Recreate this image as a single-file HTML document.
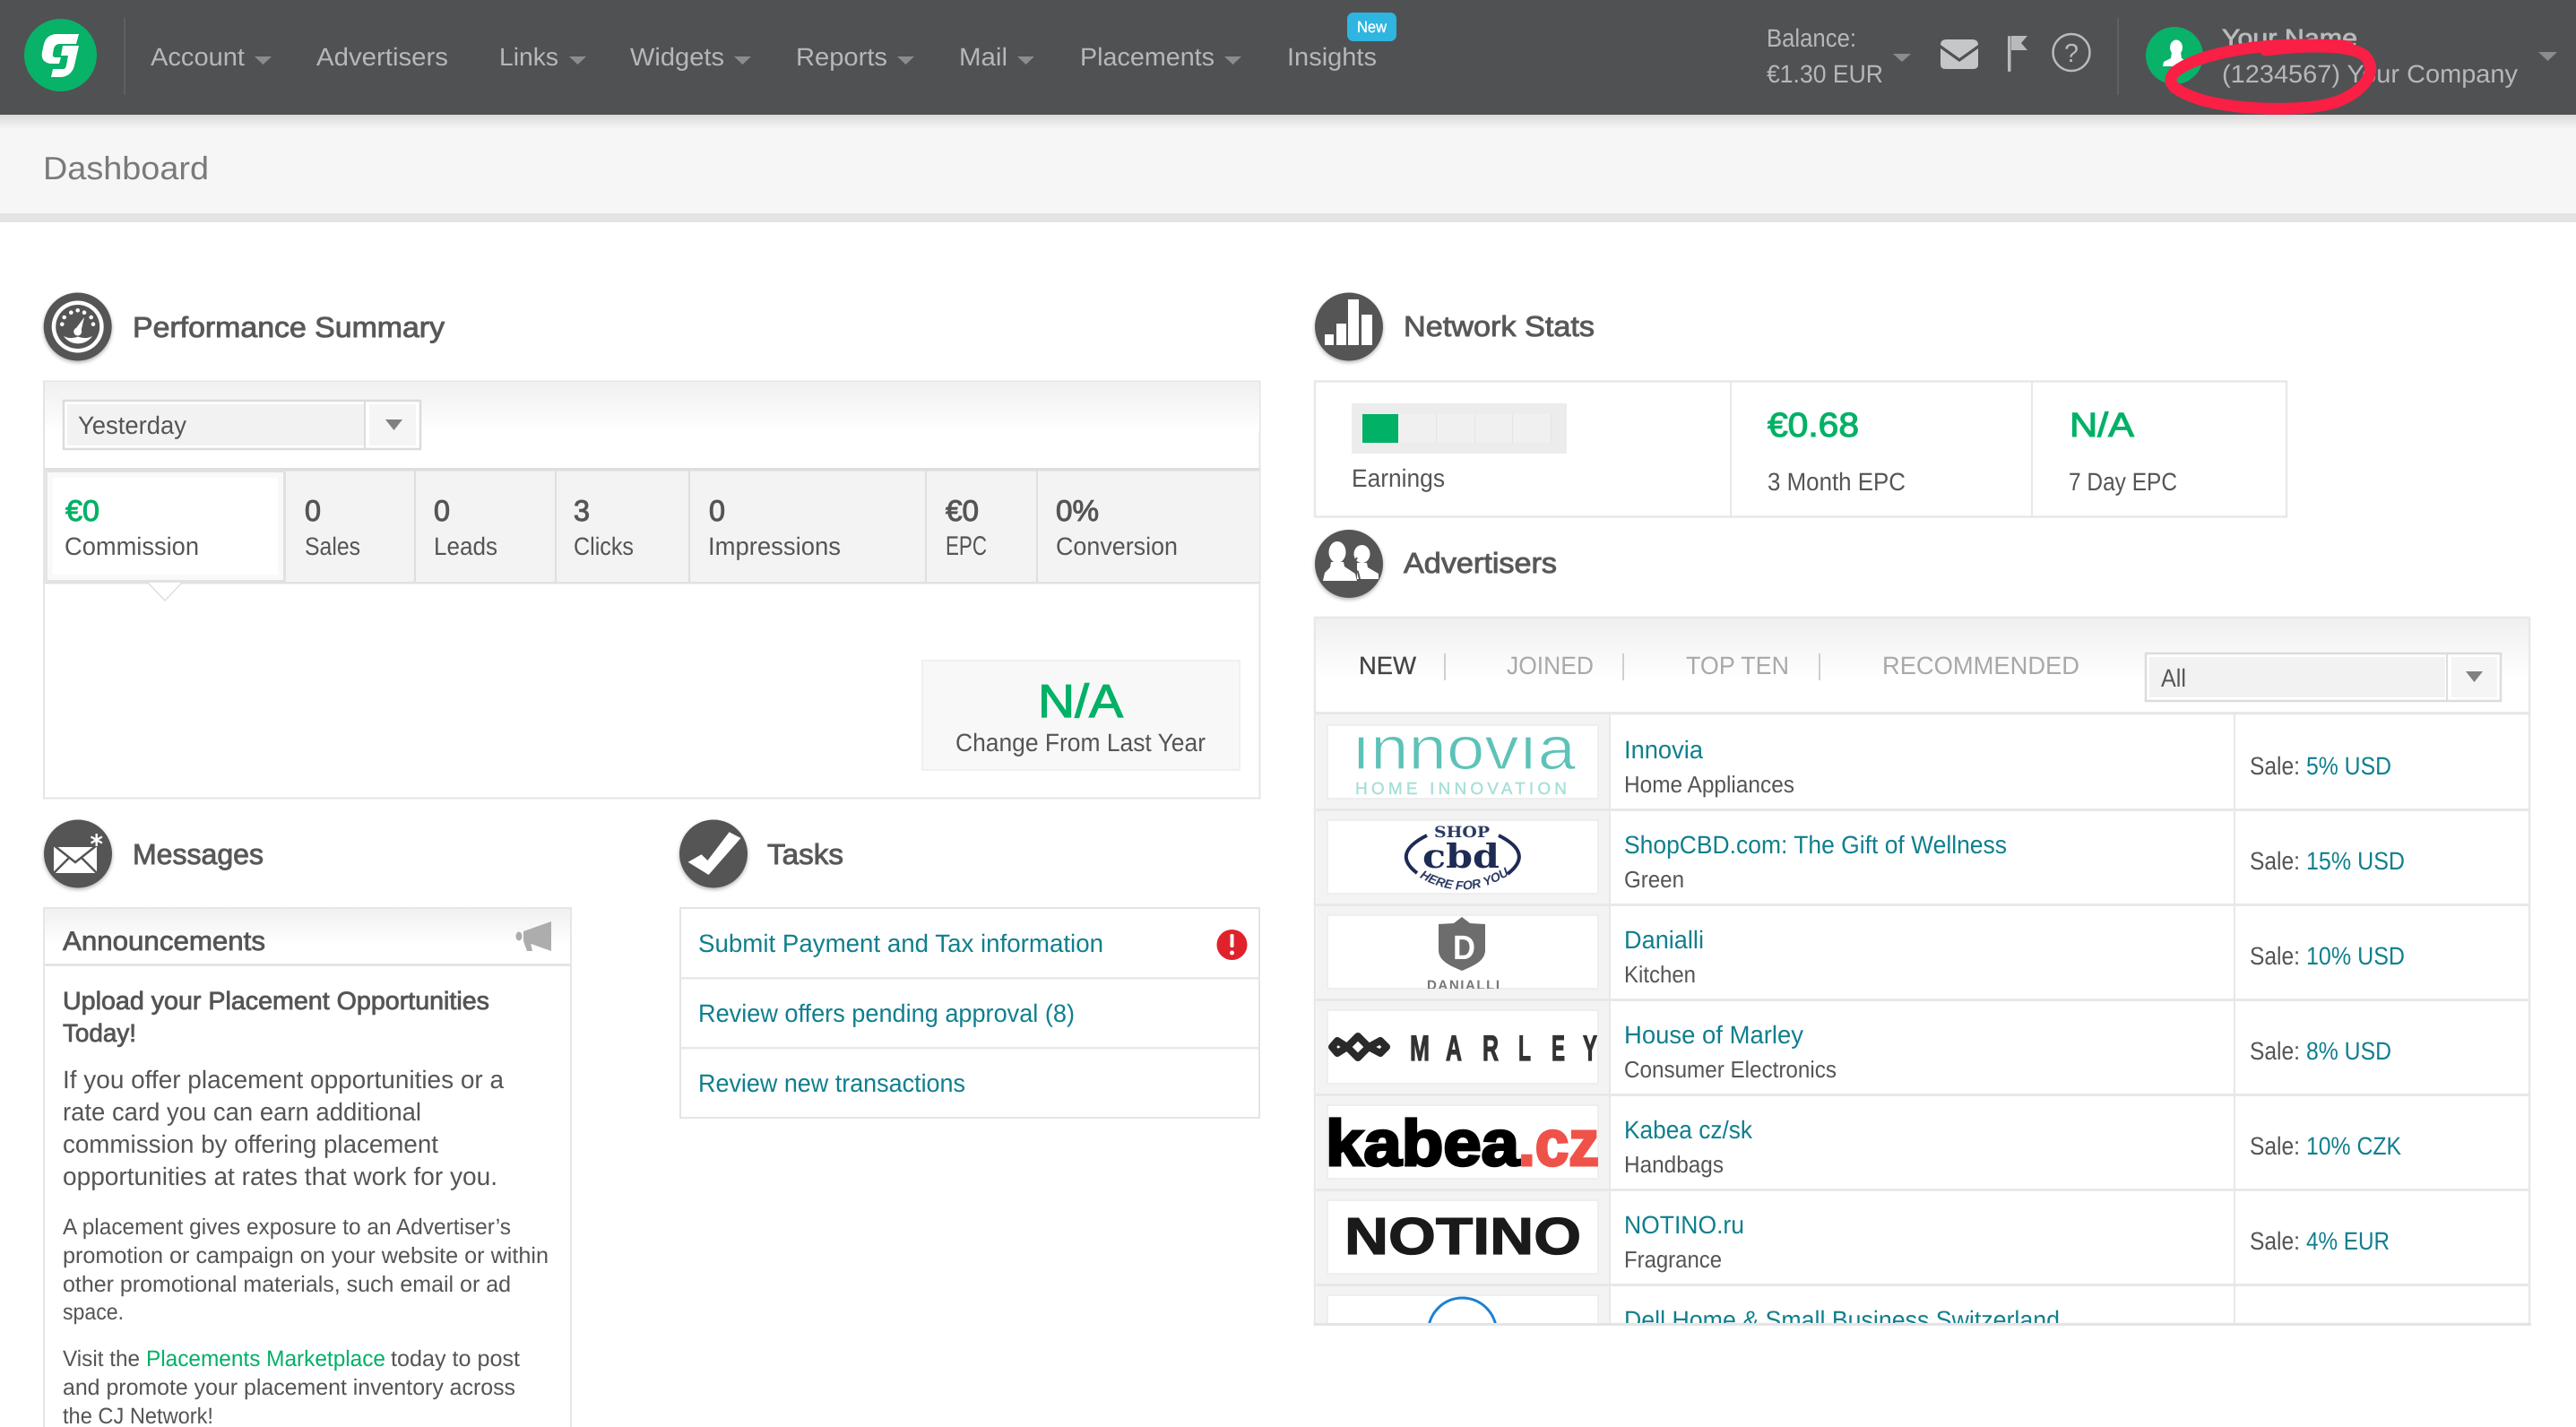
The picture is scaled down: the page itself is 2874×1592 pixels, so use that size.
<!DOCTYPE html>
<html lang="en"><head><meta charset="utf-8"><title>Dashboard</title>
<style>
html,body{margin:0;padding:0;background:#fff;width:2874px;height:1592px;overflow:hidden}
svg{display:block}
text{font-family:"Liberation Sans",sans-serif;font-size:28px;fill:#555;text-rendering:geometricPrecision}
.nav{fill:#b6b7b9}
.h{font-size:32px;fill:#585858;stroke:#585858;stroke-width:.9px}
.val{font-size:33px;fill:#555;stroke:#555;stroke-width:1px}
.g{fill:#00b166}
.lnk{fill:#0f7f8e}
.mute{fill:#a9a9a9}
.p2{font-size:25px}
.ic{filter:drop-shadow(0 2px 2px rgba(0,0,0,.3))}
</style></head><body>
<svg xmlns="http://www.w3.org/2000/svg" width="2874" height="1592" viewBox="0 0 2874 1592">
<defs>
<linearGradient id="hg" x1="0" y1="0" x2="0" y2="1"><stop offset="0" stop-color="#f0f0f0"/><stop offset="1" stop-color="#fff"/></linearGradient>
<linearGradient id="sh" x1="0" y1="0" x2="0" y2="1"><stop offset="0" stop-color="#d9d9d9"/><stop offset="1" stop-color="#f6f6f6"/></linearGradient>
<clipPath id="rows"><rect x="1466" y="790" width="1358" height="686"/></clipPath>
<clipPath id="dan"><rect x="1482" y="1022" width="300" height="81"/></clipPath>
<path id="hereArc" d="M1581 977 Q1630 1008 1682 977"/>
</defs>

<!-- header -->
<rect width="2874" height="128" fill="#505153"/>
<rect y="128" width="2874" height="110" fill="#f6f6f6"/>
<rect y="128" width="2874" height="16" fill="url(#sh)"/>
<rect y="238" width="2874" height="10" fill="#e4e4e3"/>
<circle cx="67.500" cy="61.500" r="40.500" fill="#08b268"/>
<path d="M62 38 L88 38 L85 49 L66 49 Q62 49 60 54 L59 60 Q58 64 62 64 L68 64 L66 71 L56 71 Q45 69 47 58 L49 49 Q52 39 62 38 Z" fill="#fff"/>
<path d="M70 51 L88 51 L83 73 Q80 85 68 86 L57 86 L59 77 L71 77 Q73 77 74 73 L76 62 L68 62 Z" fill="#fff"/>
<rect x="138" y="20" width="2" height="86" fill="#5f6062"/>
<rect x="2362" y="20" width="2" height="86" fill="#5f6062"/>

<text class="nav" x="168" y="73" textLength="105" lengthAdjust="spacingAndGlyphs">Account</text>
<polygon points="284,63 303,63 293.500,72" fill="#8b8c8d"/>
<text class="nav" x="353" y="73" textLength="147" lengthAdjust="spacingAndGlyphs">Advertisers</text>
<text class="nav" x="557" y="73" textLength="66" lengthAdjust="spacingAndGlyphs">Links</text>
<polygon points="635,63 654,63 644.500,72" fill="#8b8c8d"/>
<text class="nav" x="703" y="73" textLength="105" lengthAdjust="spacingAndGlyphs">Widgets</text>
<polygon points="819,63 838,63 828.500,72" fill="#8b8c8d"/>
<text class="nav" x="888" y="73" textLength="102" lengthAdjust="spacingAndGlyphs">Reports</text>
<polygon points="1001,63 1020,63 1010.500,72" fill="#8b8c8d"/>
<text class="nav" x="1070" y="73" textLength="54" lengthAdjust="spacingAndGlyphs">Mail</text>
<polygon points="1135,63 1154,63 1144.500,72" fill="#8b8c8d"/>
<text class="nav" x="1205" y="73" textLength="150" lengthAdjust="spacingAndGlyphs">Placements</text>
<polygon points="1366,63 1385,63 1375.500,72" fill="#8b8c8d"/>
<text class="nav" x="1436" y="73" textLength="100" lengthAdjust="spacingAndGlyphs">Insights</text>
<rect x="1503" y="14" width="55" height="32" rx="7" fill="#2eb5e0"/>
<text x="1514" y="36" textLength="33" lengthAdjust="spacingAndGlyphs" style="font-size:18px;fill:#fff;stroke:#fff;stroke-width:.3px">New</text>

<text class="nav" x="1971" y="52" textLength="100" lengthAdjust="spacingAndGlyphs">Balance:</text>
<text class="nav" x="1971" y="92" textLength="130" lengthAdjust="spacingAndGlyphs">€1.30 EUR</text>
<polygon points="2112,60 2132,60 2122,69" fill="#8b8c8d"/>
<!-- envelope -->
<path d="M2172 44 H2200 Q2207 44 2207 50 L2186 65 L2165 50 Q2165 44 2172 44 Z" fill="#c4c6c8"/>
<path d="M2165 54 L2186 69 L2207 54 V72 Q2207 77 2201 77 H2171 Q2165 77 2165 72 Z" fill="#c4c6c8"/>
<!-- flag -->
<rect x="2240" y="40" width="3.500" height="40" rx="1.500" fill="#b9babc"/>
<path d="M2244 40 H2262 L2255 48 L2262 56 H2244 Z" fill="#b9babc"/>
<!-- help -->
<circle cx="2311" cy="58.500" r="20.500" fill="none" stroke="#b9babc" stroke-width="2.500"/>
<text x="2303" y="69" textLength="16" lengthAdjust="spacingAndGlyphs" style="font-size:29px;fill:#b9babc">?</text>
<!-- user -->
<circle cx="2426" cy="62" r="32" fill="#08b268"/>
<ellipse cx="2428" cy="53" rx="7" ry="8.500" fill="#fff"/>
<path d="M2423 58 H2433 L2434 65 L2441 69 L2441 74 H2413 L2414 69 L2422 65 Z" fill="#fff"/>
<text x="2479" y="52" textLength="151" lengthAdjust="spacingAndGlyphs" style="fill:#b9babc;stroke:#b9babc;stroke-width:.8px">Your Name</text>
<text class="nav" x="2479" y="92" textLength="330" lengthAdjust="spacingAndGlyphs">(1234567) Your Company</text>
<polygon points="2832,58 2853,58 2842.500,68" fill="#8b8c8d"/>
<path d="M2528 56 C2575 50 2623 50 2638 62 C2655 79 2638 102 2606 114 C2570 125 2500 123 2458 112 C2426 102 2414 92 2427 80 C2450 62 2505 50 2570 50 C2590 50 2605 50 2620 52" fill="none" stroke="#f91f45" stroke-width="13" stroke-linecap="round"/>

<text x="48" y="200" textLength="185" lengthAdjust="spacingAndGlyphs" style="font-size:36px;fill:#7a7a7a">Dashboard</text>

<!-- Performance Summary -->
<g class="ic"><circle cx="86.700" cy="364.500" r="38" fill="#555"/></g>
<circle cx="86.700" cy="364.500" r="29" fill="#fff"/>
<circle cx="86.700" cy="364.500" r="24.500" fill="#555"/>
<g fill="#fff">
<circle cx="69.300" cy="361.700" r="2.300"/><circle cx="71.700" cy="354" r="2.300"/><circle cx="79.300" cy="348.700" r="2.300"/><circle cx="86.700" cy="346.300" r="2.300"/><circle cx="94" cy="348.700" r="2.300"/><circle cx="101.700" cy="354" r="2.300"/><circle cx="104" cy="361.700" r="2.300"/>
<circle cx="86.700" cy="370" r="4.500"/>
<polygon points="83.500,368 90,371 94,354"/>
<path d="M71 375 Q79 379 87 375.500 Q95 379 103 375 A19.500 19.500 0 0 1 71 375 Z"/>
</g>
<text class="h" x="148" y="376" textLength="348" lengthAdjust="spacingAndGlyphs">Performance Summary</text>

<rect x="49" y="425.500" width="1356.500" height="465" fill="#fff" stroke="#e4e4e4" stroke-width="2"/>
<rect x="50" y="427" width="1355" height="55" fill="url(#hg)"/>
<!-- select -->
<rect x="71" y="447" width="398" height="54" fill="#fff" stroke="#dcdcdc" stroke-width="2.500"/>
<rect x="75" y="451" width="331" height="46" fill="#f2f2f2"/>
<rect x="406" y="447" width="2" height="54" fill="#ddd"/>
<rect x="412" y="451" width="52" height="46" fill="#f5f5f5"/>
<polygon points="430,468 449,468 439.500,480" fill="#808080"/>
<text x="87" y="484" textLength="121" lengthAdjust="spacingAndGlyphs">Yesterday</text>

<!-- tabs -->
<rect x="50" y="522" width="1355" height="129" fill="#f3f3f3"/>
<rect x="50" y="522" width="1355" height="3.500" fill="#dfdddd"/>
<rect x="50" y="649" width="1355" height="2.500" fill="#e2e0e0"/>
<rect x="50" y="524" width="269" height="126" fill="#fff"/>
<rect x="50" y="524" width="269" height="3" fill="#e3e0e0"/>
<rect x="316" y="524" width="3" height="126" fill="#e3e0e0"/>
<rect x="50" y="647" width="269" height="4" fill="#e3e0e0"/>
<rect x="50" y="524" width="3" height="126" fill="#e6e4e4"/>
<rect x="56" y="530" width="257" height="114" fill="none" stroke="#f9f9f9" stroke-width="6"/>
<g fill="#dfdfdf"><rect x="462" y="524" width="2" height="125"/><rect x="619" y="524" width="2" height="125"/><rect x="768" y="524" width="2" height="125"/><rect x="1032" y="524" width="2" height="125"/><rect x="1156" y="524" width="2" height="125"/></g>
<polygon points="165,650 203,650 184,670" fill="#fff"/>
<path d="M165 650 L184 670 L203 650" fill="none" stroke="#e0dede" stroke-width="1.500"/>

<text x="73" y="581" textLength="38" lengthAdjust="spacingAndGlyphs" class="val" style="fill:#00b166;stroke:#00b166">€0</text>
<text x="72" y="619" textLength="150" lengthAdjust="spacingAndGlyphs">Commission</text>
<text x="340" y="581" class="val" textLength="18" lengthAdjust="spacingAndGlyphs">0</text>
<text x="340" y="619" textLength="62" lengthAdjust="spacingAndGlyphs">Sales</text>
<text x="484" y="581" class="val" textLength="18" lengthAdjust="spacingAndGlyphs">0</text>
<text x="484" y="619" textLength="71" lengthAdjust="spacingAndGlyphs">Leads</text>
<text x="640" y="581" class="val" textLength="18" lengthAdjust="spacingAndGlyphs">3</text>
<text x="640" y="619" textLength="67" lengthAdjust="spacingAndGlyphs">Clicks</text>
<text x="791" y="581" class="val" textLength="18" lengthAdjust="spacingAndGlyphs">0</text>
<text x="790" y="619" textLength="148" lengthAdjust="spacingAndGlyphs">Impressions</text>
<text x="1055" y="581" class="val" textLength="37" lengthAdjust="spacingAndGlyphs">€0</text>
<text x="1055" y="619" textLength="46" lengthAdjust="spacingAndGlyphs" style="font-size:30px">EPC</text>
<text x="1178" y="581" class="val" textLength="48" lengthAdjust="spacingAndGlyphs">0%</text>
<text x="1178" y="619" textLength="136" lengthAdjust="spacingAndGlyphs">Conversion</text>

<rect x="1029" y="737" width="354" height="122" fill="#f8f8f8" stroke="#f0f0f0" stroke-width="2"/>
<text x="1158" y="800" textLength="95" lengthAdjust="spacingAndGlyphs" class="g" style="font-size:52px;stroke:#00b166;stroke-width:1.200px">N/A</text>
<text x="1066" y="838" textLength="279" lengthAdjust="spacingAndGlyphs">Change From Last Year</text>

<!-- Network stats -->
<g class="ic"><circle cx="1505" cy="364.500" r="38" fill="#555"/></g>
<g fill="#fff"><rect x="1478" y="373" width="10" height="12"/><rect x="1491" y="361" width="11" height="24"/><rect x="1504" y="334" width="12" height="51"/><rect x="1519" y="351" width="12" height="34"/></g>
<text class="h" x="1566" y="375" textLength="213" lengthAdjust="spacingAndGlyphs">Network Stats</text>

<rect x="1467" y="425.500" width="1084" height="151" fill="#fff" stroke="#e8e8e8" stroke-width="2.500"/>
<rect x="1930" y="426" width="2" height="150" fill="#e8e8e8"/>
<rect x="2266" y="426" width="2" height="150" fill="#e8e8e8"/>
<rect x="1508" y="450" width="240" height="56" fill="#ececec"/>
<g fill="#f0f0f0"><rect x="1560" y="462" width="170" height="32"/></g>
<g fill="#e4e4e4"><rect x="1602" y="462" width="1" height="32"/><rect x="1645" y="462" width="1" height="32"/><rect x="1687" y="462" width="1" height="32"/><rect x="1730" y="462" width="1" height="32"/></g>
<rect x="1520" y="462" width="40" height="32" fill="#00b166"/>
<text x="1508" y="543" textLength="104" lengthAdjust="spacingAndGlyphs">Earnings</text>
<text x="1972" y="487" textLength="102" lengthAdjust="spacingAndGlyphs" class="g" style="font-size:38px;stroke:#00b166;stroke-width:1.100px">€0.68</text>
<text x="1972" y="547" textLength="154" lengthAdjust="spacingAndGlyphs">3 Month EPC</text>
<text x="2309" y="487" textLength="72" lengthAdjust="spacingAndGlyphs" class="g" style="font-size:38px;stroke:#00b166;stroke-width:1.100px">N/A</text>
<text x="2308" y="547" textLength="121" lengthAdjust="spacingAndGlyphs">7 Day EPC</text>

<!-- Advertisers -->
<g class="ic"><circle cx="1505" cy="629" r="38" fill="#555"/></g>
<g fill="#fff">
<ellipse cx="1519.500" cy="618" rx="9" ry="10"/>
<path d="M1514 628 H1525 L1526 633 L1538 640 V646 H1514 Z"/>
<ellipse cx="1492" cy="616" rx="9.500" ry="12"/>
</g>
<path d="M1485 627 H1499 L1500 632 L1512 640 L1514 648 H1476 L1478 639 L1484 633 Z" fill="#fff"/>
<path d="M1514 622 L1508 632 L1515 638 L1517 646" fill="none" stroke="#555" stroke-width="2"/>
<text class="h" x="1566" y="639" textLength="171" lengthAdjust="spacingAndGlyphs">Advertisers</text>

<rect x="1467" y="689" width="1355" height="788" fill="#fff" stroke="#e8e8e8" stroke-width="2.500"/>
<rect x="1468" y="690" width="1353" height="70" fill="url(#hg)"/>
<text x="1516" y="752" textLength="64" lengthAdjust="spacingAndGlyphs" style="fill:#444;stroke:#444;stroke-width:.3px">NEW</text>
<text x="1681" y="752" textLength="97" lengthAdjust="spacingAndGlyphs" class="mute">JOINED</text>
<text x="1881" y="752" textLength="115" lengthAdjust="spacingAndGlyphs" class="mute">TOP TEN</text>
<text x="2100" y="752" textLength="220" lengthAdjust="spacingAndGlyphs" class="mute">RECOMMENDED</text>
<g fill="#cfcfcf"><rect x="1611" y="729" width="2" height="30"/><rect x="1810" y="729" width="2" height="30"/><rect x="2029" y="729" width="2" height="30"/></g>
<rect x="2394" y="729" width="396" height="53" fill="#fff" stroke="#dcdcdc" stroke-width="2.500"/>
<rect x="2398" y="733" width="330" height="45" fill="#f2f2f2"/>
<rect x="2729" y="729" width="2" height="53" fill="#ddd"/>
<rect x="2735" y="733" width="51" height="45" fill="#f5f5f5"/>
<polygon points="2751,749 2770,749 2760.500,761" fill="#808080"/>
<text x="2411" y="766" textLength="28" lengthAdjust="spacingAndGlyphs">All</text>

<g clip-path="url(#rows)">
<rect x="1468" y="794" width="1354" height="3.500" fill="#e8e8e8"/>
<rect x="1469" y="797" width="326" height="680" fill="#f3f3f3"/>
<rect x="1795" y="797" width="2" height="680" fill="#e8e8e8"/>
<rect x="2492" y="797" width="2" height="680" fill="#e8e8e8"/>
<g fill="#e8e8e8"><rect x="1468" y="902" width="1354" height="3"/><rect x="1468" y="1008" width="1354" height="3"/><rect x="1468" y="1114" width="1354" height="3"/><rect x="1468" y="1220" width="1354" height="3"/><rect x="1468" y="1326" width="1354" height="3"/><rect x="1468" y="1432" width="1354" height="3"/></g>
<g fill="#fff" stroke="#eeeeee" stroke-width="2">
<rect x="1481" y="809" width="302" height="82"/><rect x="1481" y="915" width="302" height="82"/><rect x="1481" y="1021" width="302" height="82"/><rect x="1481" y="1127" width="302" height="82"/><rect x="1481" y="1233" width="302" height="82"/><rect x="1481" y="1339" width="302" height="82"/><rect x="1481" y="1445" width="302" height="82"/>
</g>

<!-- logos -->
<text x="1508" y="858" textLength="250" lengthAdjust="spacingAndGlyphs" style="font-size:68px;fill:#5dc2b8;stroke:#fff;stroke-width:1.200px">ınnovıa</text>
<text x="1512" y="886" textLength="236" lengthAdjust="spacing" style="font-size:19px;fill:#a6dfd8;stroke:#a6dfd8;stroke-width:.4px">HOME INNOVATION</text>

<text x="1600" y="934" textLength="62" lengthAdjust="spacingAndGlyphs" style="font-family:'DejaVu Serif',serif;font-weight:bold;font-size:17px;fill:#2c3a63">SHOP</text>
<text x="1587" y="968" textLength="86" lengthAdjust="spacingAndGlyphs" style="font-family:'DejaVu Serif',serif;font-weight:bold;font-size:37px;fill:#1d2b55">cbd</text>
<path d="M1592 932 Q1552 952 1581 974" fill="none" stroke="#1d2b55" stroke-width="4"/>
<path d="M1672 932 Q1712 952 1682 975" fill="none" stroke="#1d2b55" stroke-width="4"/>
<text style="font-size:14px;font-weight:bold;font-style:italic;fill:#2c3a63"><textPath href="#hereArc" startOffset="3">HERE FOR YOU</textPath></text>

<path d="M1631 1023 L1640 1030 L1657 1031 L1657 1060 C1657 1073 1642 1078 1631 1083 C1620 1078 1605 1073 1605 1060 L1605 1031 L1622 1030 Z" fill="#6d6d6d"/>
<text x="1621" y="1070" textLength="25" lengthAdjust="spacingAndGlyphs" style="font-weight:bold;font-size:38px;fill:#fff">D</text>
<g clip-path="url(#dan)"><text x="1592" y="1104" textLength="81" lengthAdjust="spacing" style="font-size:15px;font-weight:bold;fill:#777">DANIALLI</text></g>

<path d="M1486 1168 L1492 1161 L1503 1168 L1515 1156 L1527 1168 L1540 1161 L1547 1168 L1540 1175 L1527 1168 L1515 1180 L1503 1168 L1492 1175 Z" fill="none" stroke="#2a2a2a" stroke-width="8" stroke-linejoin="round"/>
<g style="font-weight:bold">
<text x="1573" y="1183" textLength="22" lengthAdjust="spacingAndGlyphs" style="font-size:40px;fill:#333;stroke:#333;stroke-width:1.200px">M</text>
<text x="1613" y="1183" textLength="18" lengthAdjust="spacingAndGlyphs" style="font-size:40px;fill:#333;stroke:#333;stroke-width:1.200px">A</text>
<text x="1654" y="1183" textLength="18" lengthAdjust="spacingAndGlyphs" style="font-size:40px;fill:#333;stroke:#333;stroke-width:1.200px">R</text>
<text x="1694" y="1183" textLength="14" lengthAdjust="spacingAndGlyphs" style="font-size:40px;fill:#333;stroke:#333;stroke-width:1.200px">L</text>
<text x="1731" y="1183" textLength="15" lengthAdjust="spacingAndGlyphs" style="font-size:40px;fill:#333;stroke:#333;stroke-width:1.200px">E</text>
<text x="1766" y="1183" textLength="16" lengthAdjust="spacingAndGlyphs" style="font-size:40px;fill:#333;stroke:#333;stroke-width:1.200px">Y</text>
</g>

<text x="1479" y="1300" textLength="216" lengthAdjust="spacingAndGlyphs" style="font-weight:bold;font-size:72px;fill:#000;stroke:#000;stroke-width:3px">kabea</text>
<text x="1694" y="1300" textLength="90" lengthAdjust="spacingAndGlyphs" style="font-weight:bold;font-size:72px;fill:#ef5249;stroke:#ef5249;stroke-width:3px">.cz</text>

<text x="1500" y="1399" textLength="264" lengthAdjust="spacingAndGlyphs" style="font-weight:bold;font-size:58px;fill:#1a1a1a;stroke:#1a1a1a;stroke-width:1.200px">NOTINO</text>

<circle cx="1631.500" cy="1486" r="38" fill="none" stroke="#1b80d3" stroke-width="3"/>

<!-- row text -->
<text class="lnk" x="1812" y="846" textLength="88" lengthAdjust="spacingAndGlyphs">Innovia</text>
<text x="1812" y="884" textLength="190" lengthAdjust="spacingAndGlyphs" style="font-size:26px">Home Appliances</text>
<text x="2510" y="864" textLength="56" lengthAdjust="spacingAndGlyphs">Sale:</text><text class="lnk" x="2573" y="864" textLength="95" lengthAdjust="spacingAndGlyphs">5% USD</text>

<text class="lnk" x="1812" y="952" textLength="427" lengthAdjust="spacingAndGlyphs">ShopCBD.com: The Gift of Wellness</text>
<text x="1812" y="990" textLength="67" lengthAdjust="spacingAndGlyphs" style="font-size:26px">Green</text>
<text x="2510" y="970" textLength="56" lengthAdjust="spacingAndGlyphs">Sale:</text><text class="lnk" x="2573" y="970" textLength="110" lengthAdjust="spacingAndGlyphs">15% USD</text>

<text class="lnk" x="1812" y="1058" textLength="89" lengthAdjust="spacingAndGlyphs">Danialli</text>
<text x="1812" y="1096" textLength="80" lengthAdjust="spacingAndGlyphs" style="font-size:26px">Kitchen</text>
<text x="2510" y="1076" textLength="56" lengthAdjust="spacingAndGlyphs">Sale:</text><text class="lnk" x="2573" y="1076" textLength="110" lengthAdjust="spacingAndGlyphs">10% USD</text>

<text class="lnk" x="1812" y="1164" textLength="200" lengthAdjust="spacingAndGlyphs">House of Marley</text>
<text x="1812" y="1202" textLength="237" lengthAdjust="spacingAndGlyphs" style="font-size:26px">Consumer Electronics</text>
<text x="2510" y="1182" textLength="56" lengthAdjust="spacingAndGlyphs">Sale:</text><text class="lnk" x="2573" y="1182" textLength="95" lengthAdjust="spacingAndGlyphs">8% USD</text>

<text class="lnk" x="1812" y="1270" textLength="143" lengthAdjust="spacingAndGlyphs">Kabea cz/sk</text>
<text x="1812" y="1308" textLength="111" lengthAdjust="spacingAndGlyphs" style="font-size:26px">Handbags</text>
<text x="2510" y="1288" textLength="56" lengthAdjust="spacingAndGlyphs">Sale:</text><text class="lnk" x="2573" y="1288" textLength="106" lengthAdjust="spacingAndGlyphs">10% CZK</text>

<text class="lnk" x="1812" y="1376" textLength="134" lengthAdjust="spacingAndGlyphs">NOTINO.ru</text>
<text x="1812" y="1414" textLength="109" lengthAdjust="spacingAndGlyphs" style="font-size:26px">Fragrance</text>
<text x="2510" y="1394" textLength="56" lengthAdjust="spacingAndGlyphs">Sale:</text><text class="lnk" x="2573" y="1394" textLength="93" lengthAdjust="spacingAndGlyphs">4% EUR</text>

<text class="lnk" x="1812" y="1482" textLength="486" lengthAdjust="spacingAndGlyphs">Dell Home &amp; Small Business Switzerland</text>
</g>
<rect x="1466" y="1476" width="1358" height="3" fill="#e4e4e4"/>

<!-- Messages -->
<g class="ic"><circle cx="87" cy="952.500" r="38" fill="#555"/></g>
<rect x="60" y="943" width="48" height="31" fill="#fff"/>
<path d="M60 943 L84 962 L108 943 M60 974 L77 957 M108 974 L91 957" fill="none" stroke="#555" stroke-width="2.500"/>
<rect x="60" y="943" width="48" height="2" fill="#555"/>
<circle cx="107.700" cy="937" r="7.500" fill="#555"/>
<g stroke="#fff" stroke-width="2.400"><path d="M107.700 930 V944 M101.500 933.500 L113.900 940.500 M101.500 940.500 L113.900 933.500"/></g>
<text class="h" x="148" y="964" textLength="146" lengthAdjust="spacingAndGlyphs">Messages</text>

<rect x="49" y="1013" width="588" height="600" fill="#fff" stroke="#e6e6e6" stroke-width="2"/>
<rect x="50" y="1014" width="586" height="40" fill="url(#hg)"/>
<rect x="49" y="1075" width="588" height="3" fill="#e4e4e4"/>
<text x="70" y="1060" textLength="226" lengthAdjust="spacingAndGlyphs" style="font-size:30px;stroke:#555;stroke-width:.8px">Announcements</text>
<path d="M584 1039 L615 1028 V1061 L584 1050 Z" fill="#adadad"/>
<ellipse cx="579" cy="1044.500" rx="3.500" ry="5" fill="#adadad"/>
<path d="M584 1050 L592 1052 L594 1061 L588 1061 Z" fill="#adadad"/>

<g style="stroke:#555;stroke-width:.8px">
<text x="70" y="1126" textLength="476" lengthAdjust="spacingAndGlyphs">Upload your Placement Opportunities</text>
<text x="70" y="1162" textLength="82" lengthAdjust="spacingAndGlyphs">Today!</text>
</g>
<text x="70" y="1214" textLength="492" lengthAdjust="spacingAndGlyphs">If you offer placement opportunities or a</text>
<text x="70" y="1250" textLength="400" lengthAdjust="spacingAndGlyphs">rate card you can earn additional</text>
<text x="70" y="1286" textLength="419" lengthAdjust="spacingAndGlyphs">commission by offering placement</text>
<text x="70" y="1322" textLength="485" lengthAdjust="spacingAndGlyphs">opportunities at rates that work for you.</text>
<text class="p2" x="70" y="1377" textLength="500" lengthAdjust="spacingAndGlyphs">A placement gives exposure to an Advertiser’s</text>
<text class="p2" x="70" y="1409" textLength="542" lengthAdjust="spacingAndGlyphs">promotion or campaign on your website or within</text>
<text class="p2" x="70" y="1441" textLength="500" lengthAdjust="spacingAndGlyphs">other promotional materials, such email or ad</text>
<text class="p2" x="70" y="1472" textLength="68" lengthAdjust="spacingAndGlyphs">space.</text>
<text class="p2" x="70" y="1524" textLength="86" lengthAdjust="spacingAndGlyphs">Visit the</text>
<text class="p2 g" x="163" y="1524" textLength="267" lengthAdjust="spacingAndGlyphs">Placements Marketplace</text>
<text class="p2" x="436" y="1524" textLength="144" lengthAdjust="spacingAndGlyphs">today to post</text>
<text class="p2" x="70" y="1556" textLength="505" lengthAdjust="spacingAndGlyphs">and promote your placement inventory across</text>
<text class="p2" x="70" y="1588" textLength="168" lengthAdjust="spacingAndGlyphs">the CJ Network!</text>

<!-- Tasks -->
<g class="ic"><circle cx="796" cy="952.500" r="38" fill="#555"/></g>
<polygon points="767.600,961.700 782.600,953.300 789.500,960 813.600,928.300 826.500,935 790.600,976" fill="#fff"/>
<text class="h" x="856" y="964" textLength="85" lengthAdjust="spacingAndGlyphs">Tasks</text>
<rect x="759" y="1013" width="646" height="234" fill="#fff" stroke="#e4e4e4" stroke-width="2"/>
<rect x="759" y="1090" width="646" height="2.500" fill="#e8e8e8"/>
<rect x="759" y="1168" width="646" height="2.500" fill="#e8e8e8"/>
<text class="lnk" x="779" y="1062" textLength="452" lengthAdjust="spacingAndGlyphs">Submit Payment and Tax information</text>
<text class="lnk" x="779" y="1140" textLength="420" lengthAdjust="spacingAndGlyphs">Review offers pending approval (8)</text>
<text class="lnk" x="779" y="1218" textLength="298" lengthAdjust="spacingAndGlyphs">Review new transactions</text>
<circle cx="1374.500" cy="1054" r="17" fill="#e0222b"/>
<rect x="1372.500" y="1042" width="4" height="15" rx="1.500" fill="#fff"/>
<circle cx="1374.500" cy="1063" r="2.500" fill="#fff"/>
</svg>
</body></html>
